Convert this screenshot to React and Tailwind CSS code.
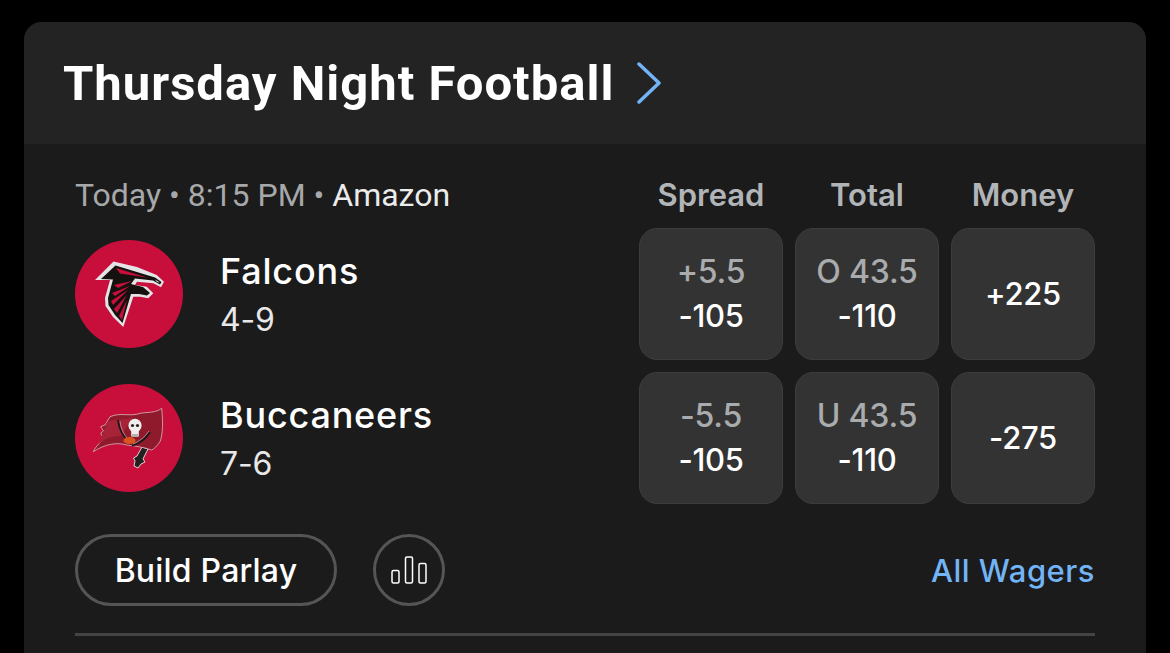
const games = [
  { name: 'Falcons', record: '4-9', spread: '+5.5', total: 'O 43.5', juice: '-105', totalJuice: '-110', money: '+225', logo: 'falcons' },
  { name: 'Buccaneers', record: '7-6', spread: '-5.5', total: 'U 43.5', juice: '-105', totalJuice: '-110', money: '-275', logo: 'bucs' },
];

function FalconsLogo() {
  return (
    <svg viewBox="0 0 108 108" className="w-full h-full">
      {/* white outline */}
      <path d="M20 40 L38.5 21.5 L62 27 L81.7 35 L89 41.7 L86 47.3 L78.3 43.3 L62 41.7 L60 45 L71.7 46.7 L78.3 53.3 L73.3 58.3 L65 56.7 L58.3 56.7 L48.3 87 L38 77 L30.5 66 L30 58 L35 40 Z" fill="#e4e4e6" />
      {/* black body */}
      <path d="M26 39 L40.5 25.5 L80 37.5 L86.5 42 L85 44.5 L78 40.5 L60 38.5 L56 44 L68 47 L75 53 L72 55.5 L64 54 L56 54 L47.5 83 L40 75 L33.5 65 L33 58 L38 39.5 Z" fill="#15110f" />
      {/* red streaks */}
      <path d="M41 28 L72 37.5 L45 33.5 Z" fill="#c80f3c" />
      <path d="M39 45 L57 41 L43 48 Z M37 53 L55 46 L40 56 Z M36 61 L53 50 L38 65 Z M39 69 L52 55 L42 73 Z M44 76 L52 60 L47 80 Z" fill="#c80f3c" />
      <path d="M80 39.5 L85 42.5 L82 42 Z" fill="#e4e4e6" />
    </svg>
  );
}

function BucsLogo() {
  return (
    <svg viewBox="0 0 108 108" className="w-full h-full">
      {/* sword handle */}
      <path d="M67 63 L62 72 L58.5 74 L60 77 L59 82 L63 84 L66 80 L70 78 L68 75 L73 65 Z" fill="#24201f" stroke="#d8d4d4" strokeWidth="1" />
      {/* flag */}
      <path d="M18.3 67.7 C22 60 27 58 28.3 54.3 L25.7 49 L28.5 47 L25.7 42.7 L30 41 L35 32.7 C46 28 56 33 65 29.3 C73 28 81 29 86.7 24.3 C88 38 88 50 85 57.7 C82 62 79 65 76.7 66 C68 63 60 62 51.7 61 C42 58 30 60 18.3 67.7 Z" fill="#8f1a2c" stroke="#d8b8bc" strokeWidth="0.8" />
      <path d="M32 38 C40 34 50 37 58 33 L46 52 C38 52 30 54 24 60 Z" fill="#a82238" />
      {/* crossed swords */}
      <path d="M43 36 C44 46 49 54 56 60" stroke="#1c1718" strokeWidth="1.8" fill="none" />
      <path d="M45 37 C46 46 50 53 56 58" stroke="#b9b5b5" strokeWidth="0.7" fill="none" />
      <path d="M75 48 C71 55 65 59 57 62" stroke="#1c1718" strokeWidth="1.8" fill="none" />
      <path d="M74 47 C70 53 65 57 58 60" stroke="#b9b5b5" strokeWidth="0.7" fill="none" />
      {/* football */}
      <ellipse cx="54.5" cy="56.5" rx="6" ry="3.6" fill="#d9541e" />
      {/* skull */}
      <ellipse cx="60" cy="41.5" rx="6.6" ry="6.8" fill="#efeeec" />
      <rect x="56.2" y="46" width="7.6" height="7" rx="1.5" fill="#efeeec" />
      <circle cx="57.5" cy="41.5" r="1.6" fill="#2a2020" />
      <circle cx="62.5" cy="41.5" r="1.6" fill="#2a2020" />
      <path d="M58 50 V53 M60 50 V53 M62 50 V53" stroke="#2a2020" strokeWidth="0.6" />
    </svg>
  );
}

function OddsCell({ top, bottom }) {
  return (
    <div className="w-[144px] h-[132px] rounded-[18px] bg-[#333333] border border-[#3d3d3d] flex flex-col items-center justify-center">
      {top && <span className="text-[32px] leading-[44px] font-medium tracking-[-0.2px] text-[#a9abad]">{top}</span>}
      <span className="text-[31px] leading-[44px] font-medium tracking-[-0.3px] text-white">{bottom}</span>
    </div>
  );
}

function TeamRow({ game }) {
  return (
    <div className="flex items-center justify-between">
      <div className="flex items-center">
        <div className="w-[108px] h-[108px] rounded-full bg-[#c80f3c] overflow-hidden">
          {game.logo === 'falcons' ? <FalconsLogo /> : <BucsLogo />}
        </div>
        <div className="ml-[37px] pt-[2px]">
          <div className="text-[36px] leading-[48px] font-medium tracking-[0.8px] text-white">{game.name}</div>
          <div className="text-[32px] leading-[49px] tracking-[-0.2px] text-[#e8e8e8]">{game.record}</div>
        </div>
      </div>
      <div className="flex gap-[12px]">
        <OddsCell top={game.spread} bottom={game.juice} />
        <OddsCell top={game.total} bottom={game.totalJuice} />
        <OddsCell bottom={game.money} />
      </div>
    </div>
  );
}

export default function App() {
  return (
    <div className="h-[653px] overflow-hidden bg-black px-[24px] pt-[22px] font-['Inter',sans-serif]">
      <div className="rounded-t-[18px] overflow-hidden bg-[#1b1b1b]">
        {/* header */}
        <div className="h-[122px] bg-[#232323] pl-[39px] flex items-center">
          <h1 className="pt-[2px] text-[49px] font-bold text-white font-['Roboto',sans-serif] tracking-[1px]">Thursday Night Football</h1>
          <svg viewBox="0 0 26 42" className="w-[26px] h-[42px] ml-[22px]" fill="none" stroke="#72b4f5" strokeWidth="3.5" strokeLinecap="round" strokeLinejoin="round">
            <path d="M3 2 L23 21 L3 40" />
          </svg>
        </div>

        <div className="px-[51px] pt-[28px] pb-[20px]">
          {/* column labels */}
          <div className="flex items-center justify-between h-[46px] mb-[10px]">
            <div className="text-[32px] font-['Roboto',sans-serif] text-[#a6a8aa]">
              Today • 8:15 PM • <span className="text-[#ececec]">Amazon</span>
            </div>
            <div className="flex gap-[12px] text-[31px] font-semibold text-[#b2b5b8]">
              <div className="w-[144px] text-center">Spread</div>
              <div className="w-[144px] text-center">Total</div>
              <div className="w-[144px] text-center">Money</div>
            </div>
          </div>

          <div className="flex flex-col gap-[12px]">
            {games.map((game) => (
              <TeamRow key={game.name} game={game} />
            ))}
          </div>

          {/* actions */}
          <div className="flex items-center justify-between mt-[30px]">
            <div className="flex items-center gap-[36px]">
              <button className="w-[262px] h-[72px] rounded-full border-[3px] border-[#555555] pt-[2px] text-[32px] font-medium tracking-[0.2px] text-white">
                Build Parlay
              </button>
              <button className="w-[72px] h-[72px] rounded-full border-[3px] border-[#555555] flex items-center justify-center">
                <svg viewBox="0 0 36 28" className="w-[36px] h-[28px]" fill="none" stroke="white" strokeWidth="1.5">
                  <rect x="1" y="14.5" width="7" height="12.5" rx="1.5" />
                  <rect x="14.5" y="1" width="7" height="26" rx="1.5" />
                  <rect x="28" y="7.5" width="7" height="19.5" rx="1.5" />
                </svg>
              </button>
            </div>
            <span className="pt-[2px] text-[31px] font-medium tracking-[0.5px] text-[#72b4f5]">All Wagers</span>
          </div>

          <div className="h-[3px] bg-[#444444] mt-[27px]" />
        </div>
      </div>
    </div>
  );
}
